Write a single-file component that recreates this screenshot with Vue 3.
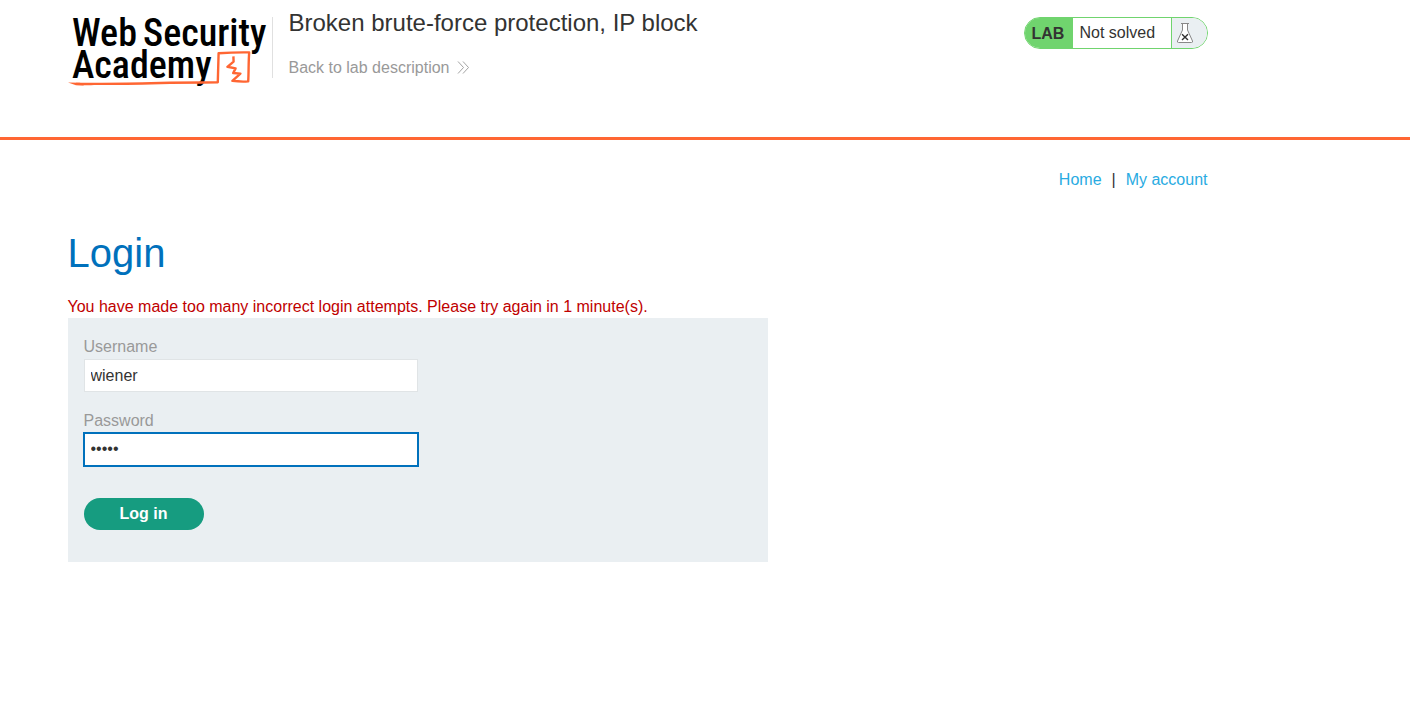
<script setup>
import { ref } from 'vue'

const username = ref('wiener')
const password = ref('peter')
</script>

<template>
  <div class="page">
    <header class="lab-header">
      <div class="frame">
        <div class="container header-row">
          <a class="logo" href="#" aria-label="Web Security Academy">
            <svg width="201" height="72" viewBox="0 0 201 72">
              <g class="logo-text">
                <text x="4" y="29">Web</text>
                <text x="75" y="29">Security</text>
                <text x="4" y="61">Academy</text>
              </g>
              <path d="M8 66.9 C14 67.2 20 67 26 66.9 C60 67 92 65.8 149.8 65.3 L150.6 36.2 C160 35.6 171 35.2 181.2 35.4 C180.4 45 180.8 55 180.2 64.4 C175 64.8 170 64.6 164.4 63.8 L172.4 56.6 L165.2 56 L167.6 51.4 L159.4 49.8 L165.6 44.6 L165.4 39.4" fill="none" stroke="#ff6633" stroke-width="2.4" stroke-linejoin="round" />
              <path d="M0 65.4 L12 65.8 L16 68.4 L8 68.2 Z" fill="#ff6633" />
            </svg>
          </a>
          <div class="title-box">
            <h2>Broken brute-force protection, IP block</h2>
            <a class="back" href="#">
              <span>Back to lab description</span>
              <svg width="12" height="14" viewBox="0 0 12 14" aria-hidden="true">
                <path d="M1 0.5 L6.5 6.5 L1 12.5 M6 0.5 L11.5 6.5 L6 12.5" fill="none" stroke="#999" stroke-width="0.9" />
              </svg>
            </a>
          </div>
          <div class="status">
            <span class="status-tag">LAB</span>
            <p>Not solved</p>
            <span class="status-icon">
              <svg width="18" height="22" viewBox="0 0 18 22" aria-hidden="true">
                <path d="M6.5 1.5 V8 L1.5 20.5 H16.5 L11.5 8 V1.5 Z" fill="#fff" />
                <path d="M5 1.5 H13 M6.5 1.5 V8 L1.5 19 Q1 20.5 2.5 20.5 H15.5 Q17 20.5 16.5 19 L11.5 8 V1.5" fill="none" stroke="#888" stroke-width="1" />
                <path d="M6 12.2 L12 18 M12 12.2 L6 18" stroke="#333" stroke-width="1.4" />
              </svg>
            </span>
          </div>
        </div>
      </div>
    </header>
    <main class="frame">
      <div class="container">
        <nav class="links">
          <a href="#">Home</a><span>|</span><a href="#">My account</a>
        </nav>
        <h1>Login</h1>
        <p class="warning">You have made too many incorrect login attempts. Please try again in 1 minute(s).</p>
        <form class="login-form" @submit.prevent>
          <label for="username">Username</label>
          <input id="username" v-model="username" type="text" name="username">
          <label for="password">Password</label>
          <input id="password" v-model="password" class="active" type="password" name="password">
          <button type="submit">Log in</button>
        </form>
      </div>
    </main>
  </div>
</template>

<style>
body {
  margin: 0;
  background: #fff;
}
</style>

<style scoped>
.page {
  font: 16px/20px "Liberation Sans", Arial, sans-serif;
  color: #333332;
}
.page * {
  box-sizing: border-box;
}
.frame {
  max-width: 1275px;
}
.container {
  max-width: 1140px;
  margin: 0 auto;
}
.lab-header {
  border-bottom: 3px solid #ff6633;
}
.header-row {
  display: flex;
  align-items: flex-start;
  min-height: 137px;
}
.logo {
  margin-top: 17px;
  height: 72px;
}
.logo svg {
  display: block;
  overflow: visible;
}
.logo-text {
  font: 500 38px "Roboto Condensed", Roboto, sans-serif;
  fill: #000;
}
.title-box {
  flex: 1;
  margin-left: 3px;
  padding: 8px 0 0 17px;
  background: linear-gradient(#e0e0e0, #e0e0e0) 0 17px / 1px 62px no-repeat;
}
h2 {
  margin: 0 0 20px;
  font-size: 24px;
  line-height: 30px;
  font-weight: 400;
}
.back {
  display: inline-flex;
  align-items: center;
  gap: 8px;
  color: #999;
  text-decoration: none;
}
.status {
  display: flex;
  height: 32px;
  margin-top: 17px;
  border: 1px solid #70d46e;
  border-radius: 16px;
  overflow: hidden;
  line-height: 30px;
}
.status-tag {
  width: 48px;
  padding-left: 7px;
  background: #70d46e;
  font-weight: 700;
  line-height: 31px;
}
.status p {
  width: 98px;
  margin: 0;
  padding-left: 7px;
}
.status-icon {
  width: 36px;
  padding: 4px;
  border-left: 1px solid #70d46e;
  background: #eaeff2;
}
.status-icon svg {
  display: block;
}
.links {
  display: flex;
  justify-content: flex-end;
  gap: 10px;
  padding-top: 30px;
}
.links a {
  color: #29abe2;
  text-decoration: none;
}
h1 {
  margin: 40px 0 20px;
  color: #0071bc;
  font-size: 40px;
  line-height: 46px;
  font-weight: 400;
}
.warning {
  margin: 0;
  color: #c00000;
  line-height: 22px;
}
.login-form {
  max-width: 700px;
  padding: 18px 16px 32px;
  background: #eaeff2;
}
label {
  display: block;
  margin-bottom: 1px;
  color: #999;
  line-height: 22px;
}
input {
  display: block;
  width: 50%;
  height: 33px;
  margin-bottom: 18px;
  padding: 0 6px;
  border: 1px solid #e0e4e6;
  border-radius: 0;
  background: #fff;
  color: #333332;
  font: inherit;
}
input.active {
  padding-bottom: 2px;
  border-color: #0071bc;
  outline: 1px solid #0071bc;
}
button {
  display: block;
  width: 120px;
  height: 32px;
  margin-top: 32px;
  padding: 0 0 1px;
  border: 0;
  border-radius: 16px;
  background: #169c80;
  color: #fff;
  font: bold 16px/20px "Liberation Sans", Arial, sans-serif;
}
</style>
